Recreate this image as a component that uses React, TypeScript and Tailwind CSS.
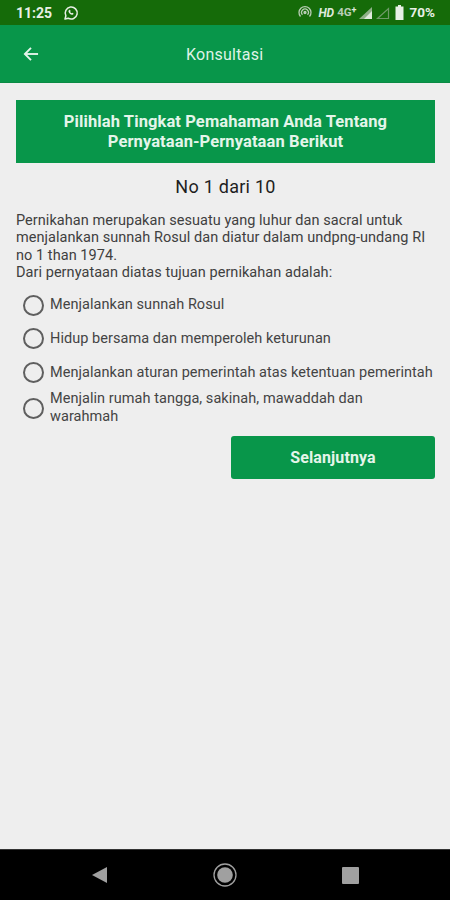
import React from "react";

function Radio({ label, className = "" }: { label: React.ReactNode; className?: string }) {
  return (
    <div className={`flex items-center ${className}`}>
      <div className="w-[21px] h-[21px] rounded-full border-[2px] border-[#5f5f5f] shrink-0 ml-[7px]" />
      <div className="ml-[6px] text-[14.5px] leading-[18px] text-[#444444] tracking-[0.05px] whitespace-nowrap">{label}</div>
    </div>
  );
}

export default function App() {
  return (
    <div className="w-[450px] h-[900px] flex flex-col bg-[#eeeeee] overflow-hidden font-['Roboto',sans-serif]">
      <div className="h-[25px] bg-[#156b09] flex items-center pl-[16px] pr-[15px] shrink-0">
        <span className="text-[14px] font-bold text-[#e8f0e6] leading-none">11:25</span>
        <svg className="ml-[11px]" width="16" height="16" viewBox="0 0 16 16" fill="none">
          <path d="M2 14l.9-3.2A6 6 0 1 1 5.2 13.2L2 14z" stroke="#e8f0e6" strokeWidth="1.5" strokeLinejoin="round" />
          <path d="M5.8 5.2c-.6.8-.4 2 .8 3.3 1.2 1.2 2.5 1.6 3.4 1 .5-.3.6-.8.5-1.1l-1.3-.7-.6.6c-.6-.2-1.2-.8-1.5-1.5l.6-.6-.6-1.3c-.3-.1-.6 0-.9.3z" fill="#e8f0e6" />
        </svg>
        <div className="ml-auto flex items-center">
          <svg width="16" height="16" viewBox="0 0 16 16" fill="none" stroke="#b9cdb5" strokeWidth="1.3">
            <path d="M3.5 11.5a6 6 0 1 1 9 0" />
            <path d="M5.500 9.800a3.400 3.400 0 1 1 5 0" />
            <circle cx="8" cy="7.500" r="1" fill="#b9cdb5" />
          </svg>
          <span className="ml-[5px] text-[12px] font-bold italic text-[#dfe9dc] leading-none">HD</span>
          <span className="ml-[3px] text-[11.5px] font-bold text-[#b9cdb5] leading-none">4G</span>
          <span className="text-[9px] font-bold text-[#dfe9dc] leading-none mb-[4px]">+</span>
          <svg className="ml-[1px]" width="15" height="14" viewBox="0 0 15 14">
            <path d="M14 1v12H1z" fill="#8fb088" />
            <path d="M14 5v8H6z" fill="#dfe9dc" />
          </svg>
          <svg className="ml-[2px]" width="15" height="14" viewBox="0 0 15 14">
            <path d="M13.5 2.500v10H2.500z" fill="none" stroke="#6f9a68" strokeWidth="1.200" />
          </svg>
          <svg className="ml-[5px]" width="9" height="15" viewBox="0 0 9 15">
            <path d="M3 0h3v1.500h2.500V15H.5V1.500H3z" fill="#e8f0e6" />
          </svg>
          <span className="ml-[6px] text-[13.5px] font-bold text-[#e8f0e6] leading-none">70%</span>
        </div>
      </div>

      <div className="h-[58px] bg-[#08964a] border-b border-[#0a8a44] flex items-center text-[#dff3e6] shrink-0">
        <svg className="ml-[23px]" width="16" height="16" viewBox="0 0 17 16" fill="none" stroke="#e4f5ea" strokeWidth="2">
          <path d="M16 8H2" />
          <path d="M8.500 1.500L2 8l6.500 6.500" />
        </svg>
        <span className="ml-[147px] mt-[3px] text-[16px] leading-none tracking-[0.25px]">Konsultasi</span>
      </div>

      <div className="pl-[16px] pr-[15px] pt-[17px] flex flex-col flex-1">
        <div className="h-[63px] bg-[#08964a] flex items-center justify-center text-center text-[16.5px] font-bold leading-[20px] tracking-[0.1px] text-[#e4f5ea]">
          <div>
            Pilihlah Tingkat Pemahaman Anda Tentang
            <br />
            Pernyataan-Pernyataan Berikut
          </div>
        </div>
        <div className="mt-[13px] text-center text-[18px] leading-[22px] text-[#1e1e1e] tracking-[0.25px]">No 1 dari 10</div>
        <div className="mt-[13.5px] text-[14.5px] leading-[17.5px] text-[#404040] tracking-[0.05px] whitespace-nowrap">
          Pernikahan merupakan sesuatu yang luhur dan sacral untuk
          <br />
          menjalankan sunnah Rosul dan diatur dalam undpng-undang RI
          <br />
          no 1 than 1974.
          <br />
          Dari pernyataan diatas tujuan pernikahan adalah:
        </div>
        <div className="mt-[6.5px] flex flex-col">
          <Radio className="h-[34px]" label="Menjalankan sunnah Rosul" />
          <Radio className="h-[33px]" label="Hidup bersama dan memperoleh keturunan" />
          <Radio className="h-[35px]" label="Menjalankan aturan pemerintah atas ketentuan pemerintah" />
          <Radio className="h-[36px]" label={<>Menjalin rumah tangga, sakinah, mawaddah dan<br />warahmah</>} />
        </div>
        <div className="flex justify-end mt-[10px]">
          <div className="w-[204px] h-[43px] rounded-[3px] bg-[#08964a] text-[#e4f5ea] flex items-center justify-center text-[16px] font-bold tracking-[0.1px]">
            Selanjutnya
          </div>
        </div>
      </div>

      <div className="h-[51px] bg-black border-t border-[#333] flex items-center shrink-0">
        <svg className="ml-[91px]" width="16" height="18" viewBox="0 0 16 18">
          <path d="M16 1v16L1 9z" fill="#a0a0a0" />
        </svg>
        <svg className="ml-[106px]" width="24" height="24" viewBox="0 0 24 24">
          <circle cx="12" cy="12" r="11" fill="none" stroke="#a0a0a0" strokeWidth="1.300" />
          <circle cx="12" cy="12" r="7.800" fill="#a0a0a0" />
        </svg>
        <div className="ml-[105px] w-[17px] h-[17px] bg-[#a0a0a0] rounded-[1px]" />
      </div>
    </div>
  );
}
